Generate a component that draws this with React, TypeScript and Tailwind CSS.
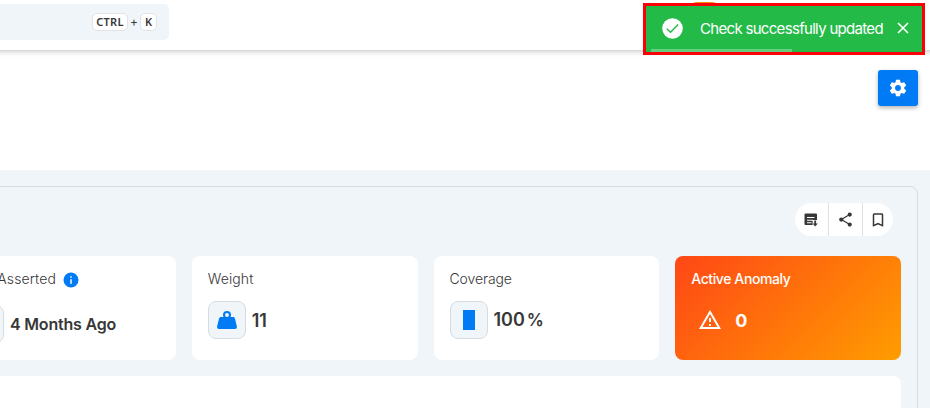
import type { ReactNode } from "react";

const COG =
  "M12,15.5A3.5,3.5 0 0,1 8.5,12A3.5,3.5 0 0,1 12,8.5A3.5,3.5 0 0,1 15.5,12A3.5,3.5 0 0,1 12,15.5M19.43,12.97C19.47,12.65 19.5,12.33 19.5,12C19.5,11.67 19.47,11.34 19.43,11L21.54,9.37C21.73,9.22 21.78,8.95 21.66,8.73L19.66,5.27C19.54,5.05 19.27,4.96 19.05,5.05L16.56,6.05C16.04,5.66 15.5,5.32 14.87,5.07L14.5,2.42C14.46,2.18 14.25,2 14,2H10C9.75,2 9.54,2.18 9.5,2.42L9.13,5.07C8.5,5.32 7.96,5.66 7.44,6.05L4.95,5.05C4.73,4.96 4.46,5.05 4.34,5.27L2.34,8.73C2.21,8.95 2.27,9.22 2.46,9.37L4.57,11C4.53,11.34 4.5,11.67 4.5,12C4.5,12.33 4.53,12.65 4.57,12.97L2.46,14.63C2.27,14.78 2.21,15.05 2.34,15.27L4.34,18.73C4.46,18.95 4.73,19.03 4.95,18.95L7.44,17.94C7.96,18.34 8.5,18.68 9.13,18.93L9.5,21.58C9.54,21.82 9.75,22 10,22H14C14.25,22 14.46,21.82 14.5,21.58L14.87,18.93C15.5,18.67 16.04,18.34 16.56,17.94L19.05,18.95C19.27,19.03 19.54,18.95 19.66,18.73L21.66,15.27C21.78,15.05 21.73,14.78 21.54,14.63L19.43,12.97Z";
const SHARE =
  "M18,16.08C17.24,16.08 16.56,16.38 16.04,16.85L8.91,12.7C8.96,12.47 9,12.24 9,12C9,11.76 8.96,11.53 8.91,11.3L15.96,7.19C16.5,7.69 17.21,8 18,8A3,3 0 0,0 21,5A3,3 0 0,0 18,2A3,3 0 0,0 15,5C15,5.24 15.04,5.47 15.09,5.7L8.04,9.81C7.5,9.31 6.79,9 6,9A3,3 0 0,0 3,12A3,3 0 0,0 6,15C6.79,15 7.5,14.69 8.04,14.19L15.16,18.34C15.11,18.55 15.08,18.77 15.08,19C15.08,20.61 16.39,21.91 18,21.91C19.61,21.91 20.92,20.61 20.92,19A2.92,2.92 0 0,0 18,16.08Z";
const BOOKMARK =
  "M17,18L12,15.82L7,18V5H17M17,3H7A2,2 0 0,0 5,5V21L12,18L19,21V5C19,3.89 18.1,3 17,3Z";
const WEIGHT =
  "M12,3A4,4 0 0,1 16,7C16,7.73 15.81,8.41 15.46,9H18C18.95,9 19.75,9.67 19.95,10.56C21.96,18.57 22,18.78 22,19A2,2 0 0,1 20,21H4A2,2 0 0,1 2,19C2,18.78 2.04,18.57 4.05,10.56C4.25,9.67 5.05,9 6,9H8.54C8.19,8.41 8,7.73 8,7A4,4 0 0,1 12,3M12,5A2,2 0 0,0 10,7A2,2 0 0,0 12,9A2,2 0 0,0 14,7A2,2 0 0,0 12,5Z";
const INFO =
  "M13,9H11V7H13M13,17H11V11H13M12,2A10,10 0 0,0 2,12A10,10 0 0,0 12,22A10,10 0 0,0 22,12A10,10 0 0,0 12,2Z";
const ALERT = "M12,2L1,21H23M12,6L19.53,19H4.47M11,10V14H13V10M11,16V18H13V16";

function Icon({ d, className }: { d: string; className: string }) {
  return (
    <svg viewBox="0 0 24 24" fill="currentColor" className={`shrink-0 ${className}`}>
      <path d={d} />
    </svg>
  );
}

function NoteDown() {
  return (
    <svg viewBox="0 0 14 14" className="mt-px -ml-px size-[14px] shrink-0">
      <path d="M1.5 0.5H12a1 1 0 0 1 1 1V7H9.5v5H1.5a1 1 0 0 1-1-1V1.500a1 1 0 0 1 1-1Z" fill="currentColor" />
      <path d="M3 4.500h7.500M3 7.300h6M3 9.800h4.500" stroke="white" strokeWidth="1.100" />
      <path d="M8.600 7h5.400v7H8.600Z" fill="white" />
      <path d="M10.300 7.500h1.800v3h1.700L11.200 13.500 8.600 10.500h1.700Z" fill="currentColor" />
    </svg>
  );
}

function Key({ children }: { children: ReactNode }) {
  return (
    <kbd className="flex h-[18px] items-center justify-center rounded-[5px] border border-[#e2e3e5] bg-white px-1 font-['Noto_Sans',sans-serif] text-[11px] font-semibold">
      {children}
    </kbd>
  );
}

function Card({ label, children }: { label: ReactNode; children: ReactNode }) {
  return (
    <div className="h-[104px] rounded-lg bg-white px-4 pt-3">
      <div className="flex h-5 items-center text-[14px] font-light">{label}</div>
      <div className="mt-[13px] flex h-[38px] items-center">{children}</div>
    </div>
  );
}

function Tile({ children }: { children: ReactNode }) {
  return (
    <div className="flex size-[38px] shrink-0 items-center justify-center rounded-lg border border-[#d7dce1] bg-[#f0f5fa] text-[#007bf5]">
      {children}
    </div>
  );
}

function Toast() {
  return (
    <div className="absolute top-[3px] left-[643px] flex h-[52px] w-[282px] items-center border-3 border-[#fb0007] bg-[#24ba48] pl-4 text-white">
      <svg viewBox="0 0 21 21" className="-mt-[2px] size-[21px] shrink-0">
        <circle cx="10.500" cy="10.500" r="10.300" fill="currentColor" />
        <path d="M4.800 10.800 8.500 14.300 16.200 6.500" fill="none" stroke="#24ba48" strokeWidth="1.500" />
      </svg>
      <span className="ml-[17px] w-[183px] text-[15px] tracking-[-0.69px] whitespace-nowrap">
        Check successfully updated
      </span>
      <svg viewBox="0 0 12 12" className="-mt-[3px] ml-[14px] size-3 shrink-0" fill="none" stroke="currentColor" strokeWidth="1.600">
        <path d="M1 1 11 11M11 1 1 11" />
      </svg>
      <div className="absolute bottom-0 left-[5px] h-[3px] w-[141px] bg-white/30" />
    </div>
  );
}

export default function App() {
  return (
    <div className="relative h-[408px] w-[930px] overflow-hidden bg-[#f0f5fa] font-[Inter,sans-serif] text-[#373737]">
      <header className="relative -mx-3 flex h-[50px] bg-white px-3 shadow-[0_1px_6px_rgba(0,0,0,0.25)]">
        <div className="mt-1 flex h-9 w-[169px] items-center justify-end rounded-r-[5px] bg-[#f0f5fa] pr-3 text-[12px]">
          <div className="grid grid-cols-[36px_12px_17px] items-center">
            <Key>
              <span className="tracking-[0.3px]">CTRL</span>
            </Key>
            <span className="text-center">+</span>
            <Key>K</Key>
          </div>
        </div>
        <div className="absolute top-[2px] left-[701px] h-8 w-[31px] rounded-t-lg bg-[#ff8b09]" />
      </header>
      <section className="flex h-[120px] justify-end bg-white pt-5 pr-3">
        <button className="flex h-9 w-10 items-center justify-center rounded-[3px] bg-[#007bf5] text-white shadow-[0_2px_4px_rgba(0,0,0,0.3)]">
          <Icon d={COG} className="size-5" />
        </button>
      </section>
      <main className="mt-4 mr-3 -ml-[67px] h-[230px] rounded-tr-lg border border-[#d7dce1] px-4 pt-4">
        <div className="flex h-[33px] justify-end pr-2">
          <div className="flex w-[98px] divide-x divide-[#dee2e6] overflow-hidden rounded-full bg-white">
            <div className="flex w-[34px] items-center justify-center">
              <NoteDown />
            </div>
            <div className="flex w-[34px] items-center justify-center">
              <Icon d={SHARE} className="size-[17px]" />
            </div>
            <div className="flex w-[30px] items-center justify-center">
              <Icon d={BOOKMARK} className="-ml-px size-[18px]" />
            </div>
          </div>
        </div>
        <div className="mt-5 grid grid-cols-4 gap-4">
          <Card
            label={
              <div className="flex w-[114px] items-center justify-end">
                <span className="tracking-[0.1px]">Asserted</span>
                <Icon d={INFO} className="mt-[3px] ml-1.5 size-[18px] text-[#007bf5]" />
              </div>
            }
          >
            <div className="mt-[8px] flex items-center">
              <Tile>{null}</Tile>
              <span className="ml-1.5 text-[16px] font-semibold tracking-[-0.2px]">4 Months Ago</span>
            </div>
          </Card>
          <Card label={<span className="tracking-[0.1px]">Weight</span>}>
            <Tile>
              <Icon d={WEIGHT} className="size-6" />
            </Tile>
            <span className="ml-1.5 text-[18px] font-semibold">11</span>
          </Card>
          <Card label={<span className="tracking-[-0.1px]">Coverage</span>}>
            <Tile>
              <div className="h-5 w-3 bg-[#007bf5]" />
            </Tile>
            <div className="ml-1.5 flex items-baseline text-[18px] font-semibold">
              <span>100</span>
              <span className="ml-[2px] text-[17px]">%</span>
            </div>
          </Card>
          <div className="h-[104px] rounded-lg bg-[linear-gradient(135deg,#ff4716,#ff9d00)] px-4 pt-3 text-white">
            <div className="flex h-5 items-center text-[14px] font-medium tracking-[-0.4px]">Active Anomaly</div>
            <div className="mt-[13px] flex h-[38px] items-center">
              <Icon d={ALERT} className="ml-[7px] size-6" />
              <span className="ml-[13px] text-[18px] font-bold">0</span>
            </div>
          </div>
        </div>
        <div className="mt-4 h-8 rounded-t-lg bg-white" />
      </main>
      <Toast />
    </div>
  );
}
